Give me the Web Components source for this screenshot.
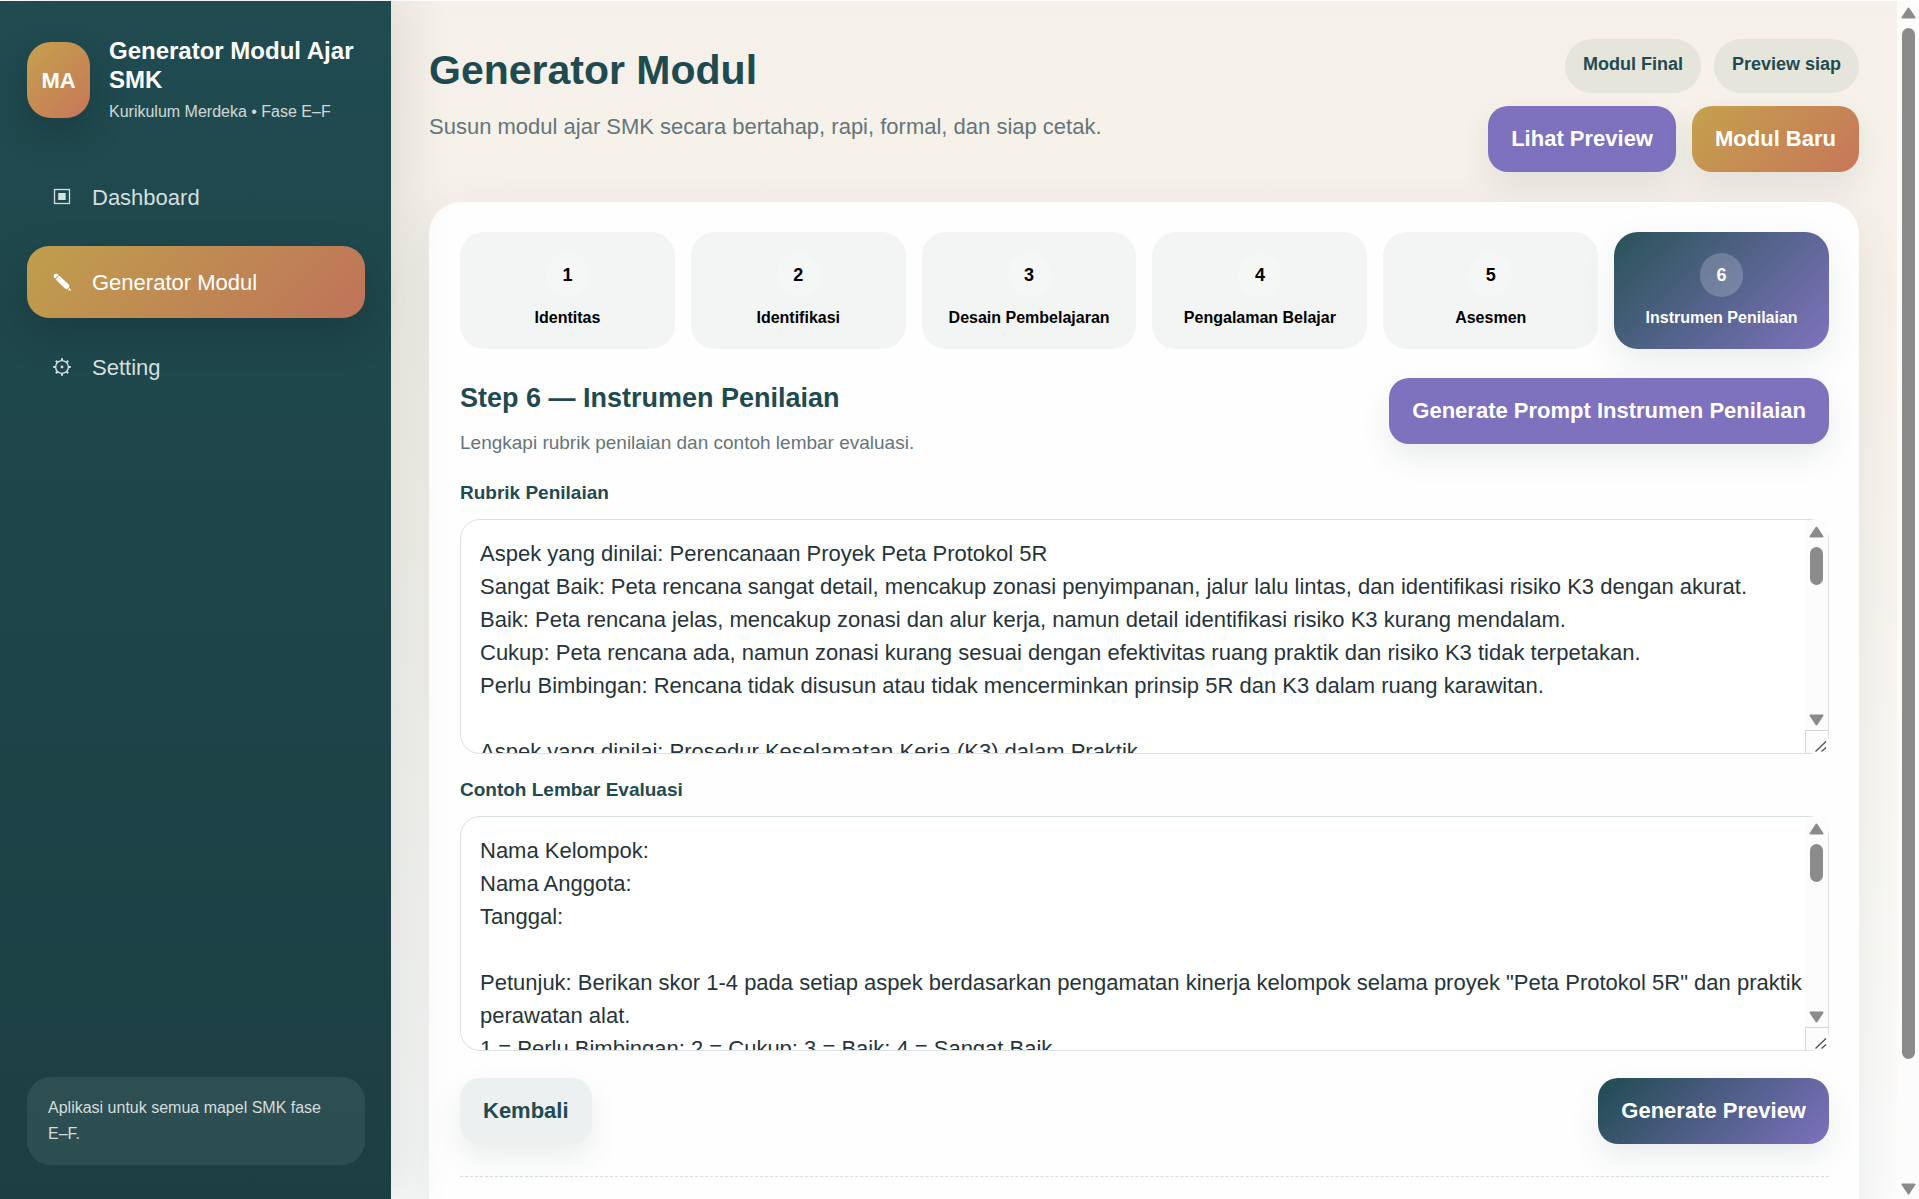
<!DOCTYPE html>
<html lang="id">
<head>
<meta charset="utf-8">
<meta name="viewport" content="width=device-width, initial-scale=1">
<title>Generator Modul Ajar SMK</title>
<style>
  html, body { margin: 0; height: 100%; }
  body { font-family: "Liberation Sans", Arial, sans-serif; font-size: 22px; line-height: 33px; color: #26343a; background: #fff; overflow: hidden; }
</style>
</head>
<body>
<app-shell>
  <app-sidebar slot="sidebar">
    <nav-item icon="dashboard">Dashboard</nav-item>
    <nav-item icon="pencil" active>Generator Modul</nav-item>
    <nav-item icon="gear">Setting</nav-item>
  </app-sidebar>
  <page-header>
    <span slot="title">Generator Modul</span>
    <span slot="subtitle">Susun modul ajar SMK secara bertahap, rapi, formal, dan siap cetak.</span>
    <status-chip slot="chips">Modul Final</status-chip>
    <status-chip slot="chips">Preview siap</status-chip>
    <app-button slot="actions" kind="violet">Lihat Preview</app-button>
    <app-button slot="actions" kind="gold">Modul Baru</app-button>
  </page-header>
  <wizard-card>
    <wizard-step slot="steps" number="1">Identitas</wizard-step>
    <wizard-step slot="steps" number="2">Identifikasi</wizard-step>
    <wizard-step slot="steps" number="3">Desain Pembelajaran</wizard-step>
    <wizard-step slot="steps" number="4">Pengalaman Belajar</wizard-step>
    <wizard-step slot="steps" number="5">Asesmen</wizard-step>
    <wizard-step slot="steps" number="6" active>Instrumen Penilaian</wizard-step>
    <span slot="title">Step 6 — Instrumen Penilaian</span>
    <span slot="hint">Lengkapi rubrik penilaian dan contoh lembar evaluasi.</span>
    <app-button slot="prompt" kind="violet">Generate Prompt Instrumen Penilaian</app-button>
    <text-field label="Rubrik Penilaian">Aspek yang dinilai: Perencanaan Proyek Peta Protokol 5R
Sangat Baik: Peta rencana sangat detail, mencakup zonasi penyimpanan, jalur lalu lintas, dan identifikasi risiko K3 dengan akurat.
Baik: Peta rencana jelas, mencakup zonasi dan alur kerja, namun detail identifikasi risiko K3 kurang mendalam.
Cukup: Peta rencana ada, namun zonasi kurang sesuai dengan efektivitas ruang praktik dan risiko K3 tidak terpetakan.
Perlu Bimbingan: Rencana tidak disusun atau tidak mencerminkan prinsip 5R dan K3 dalam ruang karawitan.

Aspek yang dinilai: Prosedur Keselamatan Kerja (K3) dalam Praktik</text-field>
    <text-field label="Contoh Lembar Evaluasi">Nama Kelompok:
Nama Anggota:
Tanggal:

Petunjuk: Berikan skor 1-4 pada setiap aspek berdasarkan pengamatan kinerja kelompok selama proyek "Peta Protokol 5R" dan praktik perawatan alat.
1 = Perlu Bimbingan; 2 = Cukup; 3 = Baik; 4 = Sangat Baik</text-field>
    <app-button slot="footer" kind="soft">Kembali</app-button>
    <app-button slot="footer" kind="primary">Generate Preview</app-button>
  </wizard-card>
</app-shell>

<script>
const define = (name, render) => customElements.define(name, class extends HTMLElement {
  constructor() {
    super();
    this.attachShadow({ mode: 'open' });
  }
  connectedCallback() {
    this.shadowRoot.innerHTML = `<style>*{box-sizing:border-box}</style>` + render(this);
  }
});

const icons = {
  dashboard: `<svg viewBox="0 0 18 18" width="18" height="18"><rect x="1.5" y="1.500" width="15" height="14" fill="none" stroke="currentColor" stroke-width="1.3"/><rect x="5.200" y="5" width="7.500" height="7" fill="currentColor"/></svg>`,
  pencil: `<svg viewBox="0 0 18 18" width="18" height="18" fill="currentColor"><path d="M.8 3.500Q.6 .6 3.500 .8Q5 1 5.600 1.900L1.900 5.600Q.9 4.900 .8 3.500Z"/><path d="M2.500 6.200L6.200 2.500L16 11.700L16.400 14L14 16.200L12 15.600Z"/><path d="M14.800 16.800L16.800 14.800L18 17.900Z"/></svg>`,
  gear: `<svg viewBox="0 0 18 18" width="18" height="18"><circle cx="9" cy="9" r="6.400" fill="none" stroke="currentColor" stroke-width="1.400"/><circle cx="9" cy="9" r="1.400" fill="currentColor"/><path d="M9 .2v2.400M9 15.400v2.400M.2 9h2.400M15.400 9h2.400M2.800 2.800l1.600 1.600M13.600 13.600l1.600 1.600M2.800 15.200l1.600-1.600M13.600 4.400l1.600-1.600" stroke="currentColor" stroke-width="2"/></svg>`
};

/* Vertical scrollbar: arrow, rail with a thumb, arrow */
define('scroll-rail', () => `
  <style>
    :host { display: flex; flex-direction: column; align-items: center; justify-content: space-between; background: #fcfcfc; padding: 6px 0 4px; gap: 9px; box-sizing: border-box; }
    svg { display: block; flex: none; fill: #8b8b8b; stroke: #8b8b8b; stroke-width: 2; stroke-linejoin: round; }
    .rail { flex: 1; width: 13px; }
    .thumb { height: var(--thumb); background: #8b8b8b; border-radius: 7px; }
  </style>
  <svg width="15" height="12" viewBox="0 0 15 12"><path d="M7.500 1.500L13.500 10.500H1.500Z"/></svg>
  <div class="rail"><div class="thumb"></div></div>
  <svg width="15" height="12" viewBox="0 0 15 12"><path d="M7.500 10.500L13.500 1.500H1.500Z"/></svg>`);

define('app-shell', () => `
  <style>
    :host { display: flex; height: 100vh; box-sizing: border-box; border-top: 1px solid #fff; background: linear-gradient(180deg, #f5f0e9 0%, #f7f3eb 30%, #fdfdfd 100%); }
    main { flex: 1; min-width: 0; padding: 38px 38px 0 38px; overflow: hidden; display: flex; flex-direction: column; gap: 30px; }
    ::slotted([slot=sidebar]) { flex: none; width: 391px; z-index: 1; }
    scroll-rail { flex: none; width: 22px; --thumb: 90%; }
  </style>
  <slot name="sidebar"></slot>
  <main><slot></slot></main>
  <scroll-rail></scroll-rail>`);

define('app-sidebar', () => `
  <style>
    :host { display: flex; flex-direction: column; box-sizing: border-box; padding: 35px 26px 34px 27px; color: #fff; background: linear-gradient(180deg, #204b50, #1c3f43); box-shadow: 12px 0 48px rgba(36, 62, 60, .12); }
    .brand { display: flex; align-items: center; gap: 19px; }
    .logo { flex: none; width: 63px; height: 76px; border-radius: 24px; display: grid; place-items: center; font-weight: 700; background: linear-gradient(135deg, #c5a14d, #c7765a); box-shadow: 0 14px 32px rgba(16, 40, 44, .35); }
    .name { font-size: 24px; line-height: 29px; font-weight: 700; }
    .sub { font-size: 16px; line-height: 24px; margin-top: 6px; opacity: .78; }
    nav { display: flex; flex-direction: column; gap: 13px; margin-top: 37px; }
    .note { margin-top: auto; padding: 18px 21px; border-radius: 24px; font-size: 16px; line-height: 26px; background: rgba(255, 255, 255, .08); color: #d5dddd; }
  </style>
  <div class="brand">
    <div class="logo">MA</div>
    <div><div class="name">Generator Modul Ajar SMK</div><div class="sub">Kurikulum Merdeka • Fase E–F</div></div>
  </div>
  <nav><slot></slot></nav>
  <div class="note">Aplikasi untuk semua mapel SMK fase E–F.</div>`);

define('nav-item', el => `
  <style>
    :host { display: block; }
    a { display: flex; align-items: center; gap: 17px; height: 72px; padding: 0 22px; border-radius: 22px; color: #d5dfdf; text-decoration: none; }
    :host([active]) a { color: #fff; background: linear-gradient(135deg, #bf9f4c, #bf735a); box-shadow: 0 14px 36px rgba(16, 40, 44, .35); }
    .icon { width: 26px; display: grid; place-items: center; }
    svg { display: block; }
  </style>
  <a href="#"><span class="icon">${icons[el.getAttribute('icon')]}</span><slot></slot></a>`);

define('page-header', () => `
  <style>
    :host { display: flex; justify-content: space-between; gap: 24px; }
    h1 { margin: 0; font-size: 41px; line-height: 62px; font-weight: 700; color: #1f4b50; }
    p { margin: 9px 0 0; color: #66757a; }
    .right { display: flex; flex-direction: column; align-items: flex-end; gap: 13px; }
    .chips { display: flex; gap: 13px; }
    .actions { display: flex; gap: 16px; }
  </style>
  <div><h1><slot name="title"></slot></h1><p><slot name="subtitle"></slot></p></div>
  <div class="right">
    <div class="chips"><slot name="chips"></slot></div>
    <div class="actions"><slot name="actions"></slot></div>
  </div>`);

define('status-chip', () => `
  <style>
    :host { display: block; box-sizing: border-box; height: 54px; padding: 12px 18px 0; border-radius: 27px; font-size: 18px; line-height: 27px; font-weight: 700; white-space: nowrap; color: #1f4b50; background: #e5e5dc; }
  </style>
  <slot></slot>`);

define('app-button', () => `
  <style>
    :host { display: block; flex: none; }
    button { display: block; height: 66px; padding: 0 23px 2px; border: 0; border-radius: 20px; font: inherit; font-weight: 700; white-space: nowrap; color: #fff; background: #7e71be; box-shadow: 0 14px 32px rgba(36, 62, 60, .09); cursor: pointer; }
    :host([kind=gold]) button { background: linear-gradient(135deg, #c5a14d, #c7765a); }
    :host([kind=primary]) button { background: linear-gradient(135deg, #1f4b50, #7e71be); }
    :host([kind=soft]) button { background: #ecf0f1; color: #1f4b50; }
  </style>
  <button type="button"><slot></slot></button>`);

define('wizard-card', () => `
  <style>
    :host { display: flex; flex-direction: column; flex: none; padding: 30px 30px 120px 31px; border-radius: 32px; background: #fefefe; box-shadow: 0 20px 60px rgba(36, 62, 60, .1); }
    .steps { display: grid; grid-template-columns: repeat(6, 1fr); gap: 16px; }
    .head { display: flex; justify-content: space-between; align-items: flex-start; margin: 29px 0 21px; }
    h2 { margin: 0; font-size: 27px; line-height: 41px; color: #1f4b50; }
    p { margin: 9px 0 0; font-size: 19px; line-height: 29px; color: #66757a; }
    .fields { display: flex; flex-direction: column; gap: 21px; }
    .footer { display: flex; justify-content: space-between; margin-top: 27px; padding-bottom: 32px; border-bottom: 1px dashed #d5e0df; }
  </style>
  <div class="steps"><slot name="steps"></slot></div>
  <div class="head">
    <div><h2><slot name="title"></slot></h2><p><slot name="hint"></slot></p></div>
    <slot name="prompt"></slot>
  </div>
  <div class="fields"><slot></slot></div>
  <div class="footer"><slot name="footer"></slot></div>`);

define('wizard-step', el => `
  <style>
    :host { display: block; min-width: 0; }
    button { display: flex; flex-direction: column; align-items: center; gap: 9px; width: 100%; height: 117px; padding: 21px 8px 0; border: 0; border-radius: 24px; font: inherit; font-size: 16px; line-height: 24px; font-weight: 700; white-space: nowrap; color: #000; background: #f3f5f5; cursor: pointer; }
    .num { width: 43px; height: 44px; padding-bottom: 1px; border-radius: 22px; display: grid; place-items: center; font-size: 18px; background: rgba(255, 255, 255, .2); }
    :host([active]) button { color: #fff; background: linear-gradient(135deg, #295358, #7f73be); box-shadow: 0 14px 36px rgba(36, 62, 60, .09); }
  </style>
  <button type="button"><span class="num">${el.getAttribute('number')}</span><span><slot></slot></span></button>`);

define('text-field', el => `
  <style>
    :host { display: flex; flex-direction: column; gap: 12px; }
    label { font-size: 19px; line-height: 29px; font-weight: 700; color: #1f4b50; }
    .box { position: relative; display: flex; }
    textarea { flex: 1; height: 235px; padding: 17px 23px 0 19px; border: 1px solid #d9e1e2; border-radius: 20px; background: #fff; font: inherit; color: inherit; resize: none; outline: none; overflow: hidden; }
    .side { position: absolute; top: 1px; right: 1px; bottom: 1px; width: 23px; display: flex; flex-direction: column; }
    scroll-rail { flex: 1; --thumb: 24%; }
    .grip { height: 23px; border: solid #d4d6d6; border-width: 1px 0 0 1px; background: #fcfcfc; }
    svg { display: block; }
  </style>
  <label for="area">${el.getAttribute('label')}</label>
  <div class="box">
    <textarea id="area">${el.textContent}</textarea>
    <div class="side">
      <scroll-rail></scroll-rail>
      <div class="grip"><svg width="22" height="22" viewBox="0 0 22 22" stroke="#4c4f50" stroke-width="1.300"><path d="M9.500 20.500L20 10.500M15.500 20.500L20 16.500"/></svg></div>
    </div>
  </div>`);
</script>
</body>
</html>
